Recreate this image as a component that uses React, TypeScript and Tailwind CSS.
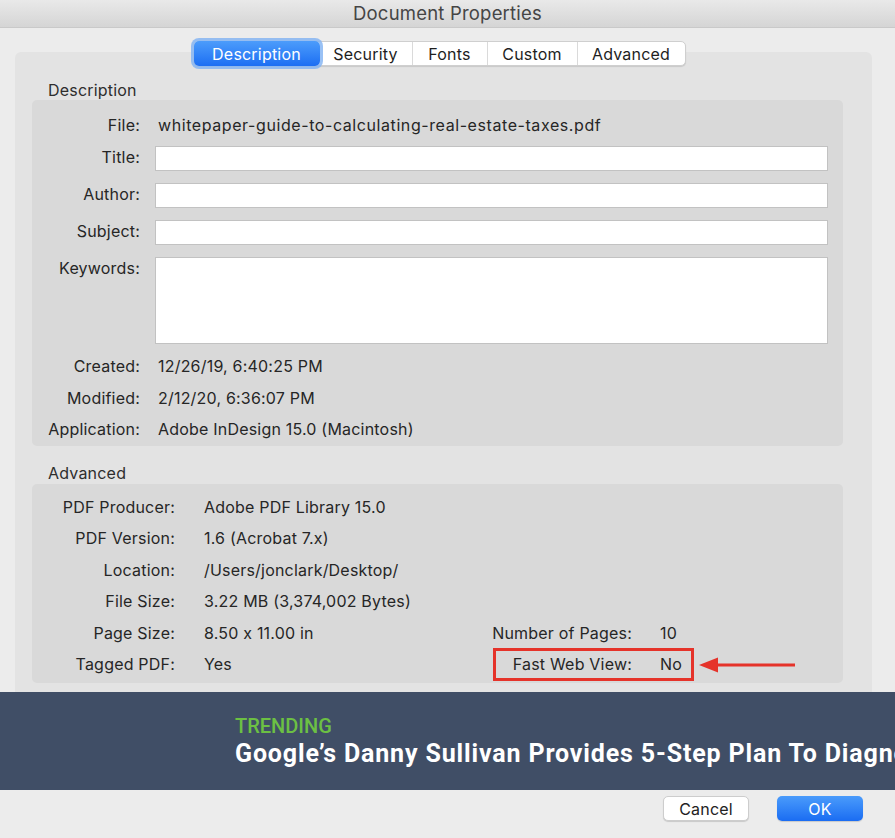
import type { ReactNode } from "react";

const descRows = [
  { label: "Created:", value: "12/26/19, 6:40:25 PM" },
  { label: "Modified:", value: "2/12/20, 6:36:07 PM" },
  { label: "Application:", value: "Adobe InDesign 15.0 (Macintosh)" },
];

const tabs = ["Description", "Security", "Fonts", "Custom", "Advanced"];
const tabWidths = ["w-[126px]", "w-[92px]", "w-[75px]", "w-[90px]", "w-[108px]"];

function Field({ label, children, top }: { label: string; children: ReactNode; top: string }) {
  return (
    <div className={`flex items-start ${top}`}>
      <div className="w-[108px] shrink-0 text-right leading-[22px]">{label}</div>
      <div className="ml-[15px] flex-1">{children}</div>
    </div>
  );
}

function AdvRow({ label, value, right }: { label: string; value: string; right?: ReactNode }) {
  return (
    <div className="relative flex h-[31.5px] items-center">
      <div className="w-[143px] shrink-0 text-right">{label}</div>
      <div className="ml-[29px] w-[288px] shrink-0">{value}</div>
      {right}
    </div>
  );
}

export default function App() {
  return (
    <div className="h-[838px] w-[895px] overflow-hidden bg-[#ececec] font-['Inter',sans-serif] text-[16px] tracking-[0.2px] text-[#262626]">
      <div className="flex h-[28px] items-center justify-center border-b border-[#c9c9c9] bg-gradient-to-b from-[#e9e9e9] to-[#d5d5d5] text-[18.5px] text-[#454545]">
        Document Properties
      </div>

      <div className="pl-[15px] pr-[23px] pt-[24px]">
        <div className="flow-root h-[640px] rounded-t-[6px] bg-[#e3e3e3] pl-[17px] pr-[29px]">
          <div className="-mt-[11px] flex justify-center pl-[4px]">
            <div className="flex h-[25px] rounded-[5px] border border-[#cfcfcf] bg-white shadow-[0_1px_1px_rgba(0,0,0,0.12)]">
              {tabs.map((t, i) =>
                i === 0 ? (
                  <div
                    key={t}
                    className={`${tabWidths[i]} -my-[1px] -ml-[1px] flex items-center justify-center rounded-[5px] bg-gradient-to-b from-[#4c9cfb] to-[#1c6ef3] text-white ring-[3px] ring-[#7fb1f3]/80`}
                  >
                    {t}
                  </div>
                ) : (
                  <div
                    key={t}
                    className={`${tabWidths[i]} flex items-center justify-center ${i > 1 ? "border-l border-[#dadada]" : ""} text-[#1e1e1e]`}
                  >
                    {t}
                  </div>
                )
              )}
            </div>
          </div>

          <div className="mt-[14px] pl-[16px] leading-[20px] text-[#2e2e2e]">Description</div>
          <div className="h-[346px] rounded-[5px] bg-[#d9d9d9] pr-[15px] pt-[14px]">
            <Field label="File:" top="">
              <div className="pl-[3px] leading-[22px] tracking-[0.58px]">whitepaper-guide-to-calculating-real-estate-taxes.pdf</div>
            </Field>
            <Field label="Title:" top="mt-[10px]">
              <div className="h-[25px] border border-[#c2c2c2] bg-white" />
            </Field>
            <Field label="Author:" top="mt-[12px]">
              <div className="h-[25px] border border-[#c2c2c2] bg-white" />
            </Field>
            <Field label="Subject:" top="mt-[12px]">
              <div className="h-[25px] border border-[#c2c2c2] bg-white" />
            </Field>
            <Field label="Keywords:" top="mt-[12px]">
              <div className="h-[87px] border border-[#c2c2c2] bg-white" />
            </Field>
            {descRows.map((r, i) => (
              <Field key={r.label} label={r.label} top={i === 0 ? "mt-[11px]" : "mt-[9.5px]"}>
                <div className="pl-[3px] leading-[22px]">{r.value}</div>
              </Field>
            ))}
          </div>

          <div className="mt-[17px] pl-[16px] leading-[20px] text-[#2e2e2e]">Advanced</div>
          <div className="mt-[1px] h-[199px] rounded-[5px] bg-[#d9d9d9] pt-[7px]">
            <AdvRow label="PDF Producer:" value="Adobe PDF Library 15.0" />
            <AdvRow label="PDF Version:" value="1.6 (Acrobat 7.x)" />
            <AdvRow label="Location:" value="/Users/jonclark/Desktop/" />
            <AdvRow label="File Size:" value="3.22 MB (3,374,002 Bytes)" />
            <AdvRow
              label="Page Size:"
              value="8.50 x 11.00 in"
              right={
                <>
                  <div className="w-[140px] shrink-0 text-right">Number of Pages:</div>
                  <div className="ml-[28px]">10</div>
                </>
              }
            />
            <AdvRow
              label="Tagged PDF:"
              value="Yes"
              right={
                <>
                  <div className="w-[140px] shrink-0 text-right">Fast Web View:</div>
                  <div className="ml-[28px]">No</div>
                  <div className="pointer-events-none absolute left-[461px] -top-[1px] h-[33px] w-[201px] border-[3px] border-[#e5332a]" />
                  <svg
                    className="absolute left-[667px] top-[7px]"
                    width="98"
                    height="18"
                    viewBox="0 0 98 18"
                  >
                    <path d="M0 9 L19 1.5 L19 16.5 Z" fill="#e5332a" />
                    <rect x="17" y="7.5" width="79" height="3" fill="#e5332a" />
                  </svg>
                </>
              }
            />
          </div>
        </div>
      </div>

      <div className="h-[98px] overflow-hidden bg-[#404e66] pl-[235px] pt-[22px] font-['Roboto',sans-serif] tracking-normal">
        <div className="text-[20px] font-medium leading-[24px] text-[#6cc043]">TRENDING</div>
        <div className="mt-[1px] whitespace-nowrap text-[25px] font-bold leading-[30px] tracking-[0.85px] text-white">
          Google’s Danny Sullivan Provides 5-Step Plan To Diagnose Ranking Drops
        </div>
      </div>

      <div className="flex justify-end gap-[28px] pr-[32px] pt-[6px] text-[16px]">
        <div className="flex h-[25px] w-[86px] items-center justify-center rounded-[5px] border border-[#cdcdcd] bg-white text-[#222] shadow-[0_1px_1px_rgba(0,0,0,0.15)]">
          Cancel
        </div>
        <div className="flex h-[25px] w-[86px] items-center justify-center rounded-[5px] bg-gradient-to-b from-[#4a9bfb] to-[#1a6cf2] text-white shadow-[0_1px_1px_rgba(0,0,0,0.15)]">
          OK
        </div>
      </div>
    </div>
  );
}
